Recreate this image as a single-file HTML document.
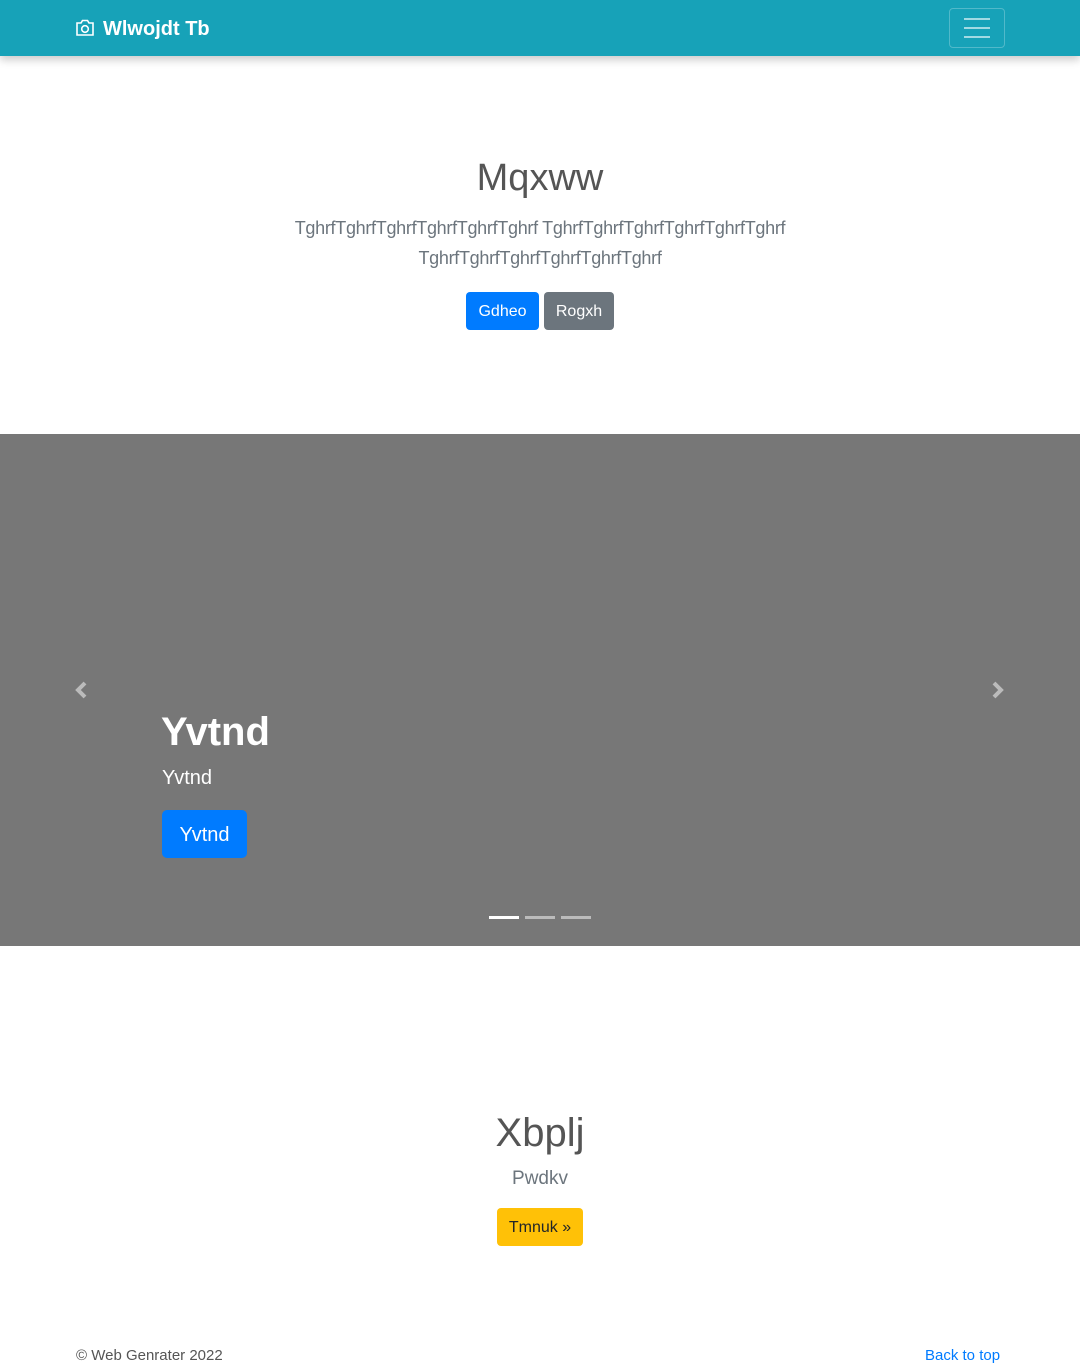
<!DOCTYPE html>
<html><head><meta charset="utf-8"><style>
*{box-sizing:border-box;margin:0;padding:0}
body{width:1080px;height:1366px;position:relative;font-family:"Liberation Sans",sans-serif;background:#fff;color:#212529;overflow:hidden}
.a{position:absolute}
.c{left:0;width:1080px;text-align:center}
.btn{position:absolute;border-radius:4px;color:#fff;text-align:center}
</style></head><body>
<div class="a" style="left:0;top:0;width:1080px;height:56px;background:#17a2b8;box-shadow:0 4px 8px rgba(0,0,0,.2)"></div>
<svg class="a" style="left:75px;top:19px" width="20" height="18" viewBox="0 0 20 18" fill="none" stroke="#fff" stroke-width="1.6"><path d="M2 4h4l1.5-2.5h5L14 4h4v12H2z"/><circle cx="10" cy="10" r="3.3"/></svg>
<div class="a" style="left:103px;top:18px;font-size:20px;font-weight:bold;color:#fff">Wlwojdt Tb</div>
<div class="a" style="left:949px;top:8px;width:56px;height:40px;border:1px solid rgba(255,255,255,.25);border-radius:4px"></div>
<div class="a" style="left:964px;top:18px;width:26px;height:2px;background:rgba(255,255,255,.6);box-shadow:0 9px 0 rgba(255,255,255,.6),0 18px 0 rgba(255,255,255,.6)"></div>

<div class="a c" style="top:157px;font-size:38px;font-weight:300;color:#555">Mqxww</div>
<div class="a c" style="top:213px;font-size:18px;letter-spacing:-0.3px;font-weight:300;line-height:30px;color:#6c757d">TghrfTghrfTghrfTghrfTghrfTghrf TghrfTghrfTghrfTghrfTghrfTghrf<br>TghrfTghrfTghrfTghrfTghrfTghrf</div>
<div class="btn" style="left:466px;top:292px;width:73px;height:38px;background:#007bff;font-size:16px;line-height:39px">Gdheo</div>
<div class="btn" style="left:544px;top:292px;width:70px;height:38px;background:#6c757d;font-size:16px;line-height:39px">Rogxh</div>

<div class="a" style="left:0;top:434px;width:1080px;height:512px;background:#777"></div>
<svg class="a" style="left:73px;top:680px" width="16" height="20" viewBox="0 0 16 20"><path d="M12 3L5 10l7 7" fill="none" stroke="#bbb" stroke-width="4"/></svg>
<svg class="a" style="left:990px;top:680px" width="16" height="20" viewBox="0 0 16 20"><path d="M4 3l7 7-7 7" fill="none" stroke="#bbb" stroke-width="4"/></svg>
<div class="a" style="left:161px;top:710px;font-size:40px;font-weight:bold;color:#fff">Yvtnd</div>
<div class="a" style="left:162px;top:767px;font-size:20px;color:#fff">Yvtnd</div>
<div class="btn" style="left:162px;top:810px;width:85px;height:48px;background:#007bff;font-size:20px;line-height:50px;border-radius:5px">Yvtnd</div>
<div class="a" style="left:489px;top:916px;width:30px;height:3px;background:#fff"></div>
<div class="a" style="left:525px;top:916px;width:30px;height:3px;background:#bbb"></div>
<div class="a" style="left:561px;top:916px;width:30px;height:3px;background:#bbb"></div>

<div class="a c" style="top:1111px;font-size:40px;font-weight:500;color:#555">Xbplj</div>
<div class="a c" style="top:1168px;font-size:19px;font-weight:300;color:#6c757d">Pwdkv</div>
<div class="btn" style="left:497px;top:1208px;width:86px;height:38px;background:#ffc107;color:#212529;font-size:16px;line-height:40px">Tmnuk »</div>

<div class="a" style="left:76px;top:1347px;font-size:15px;color:#555">© Web Genrater 2022</div>
<div class="a" style="left:925px;top:1347px;font-size:15px;color:#007bff">Back to top</div>
</body></html>
